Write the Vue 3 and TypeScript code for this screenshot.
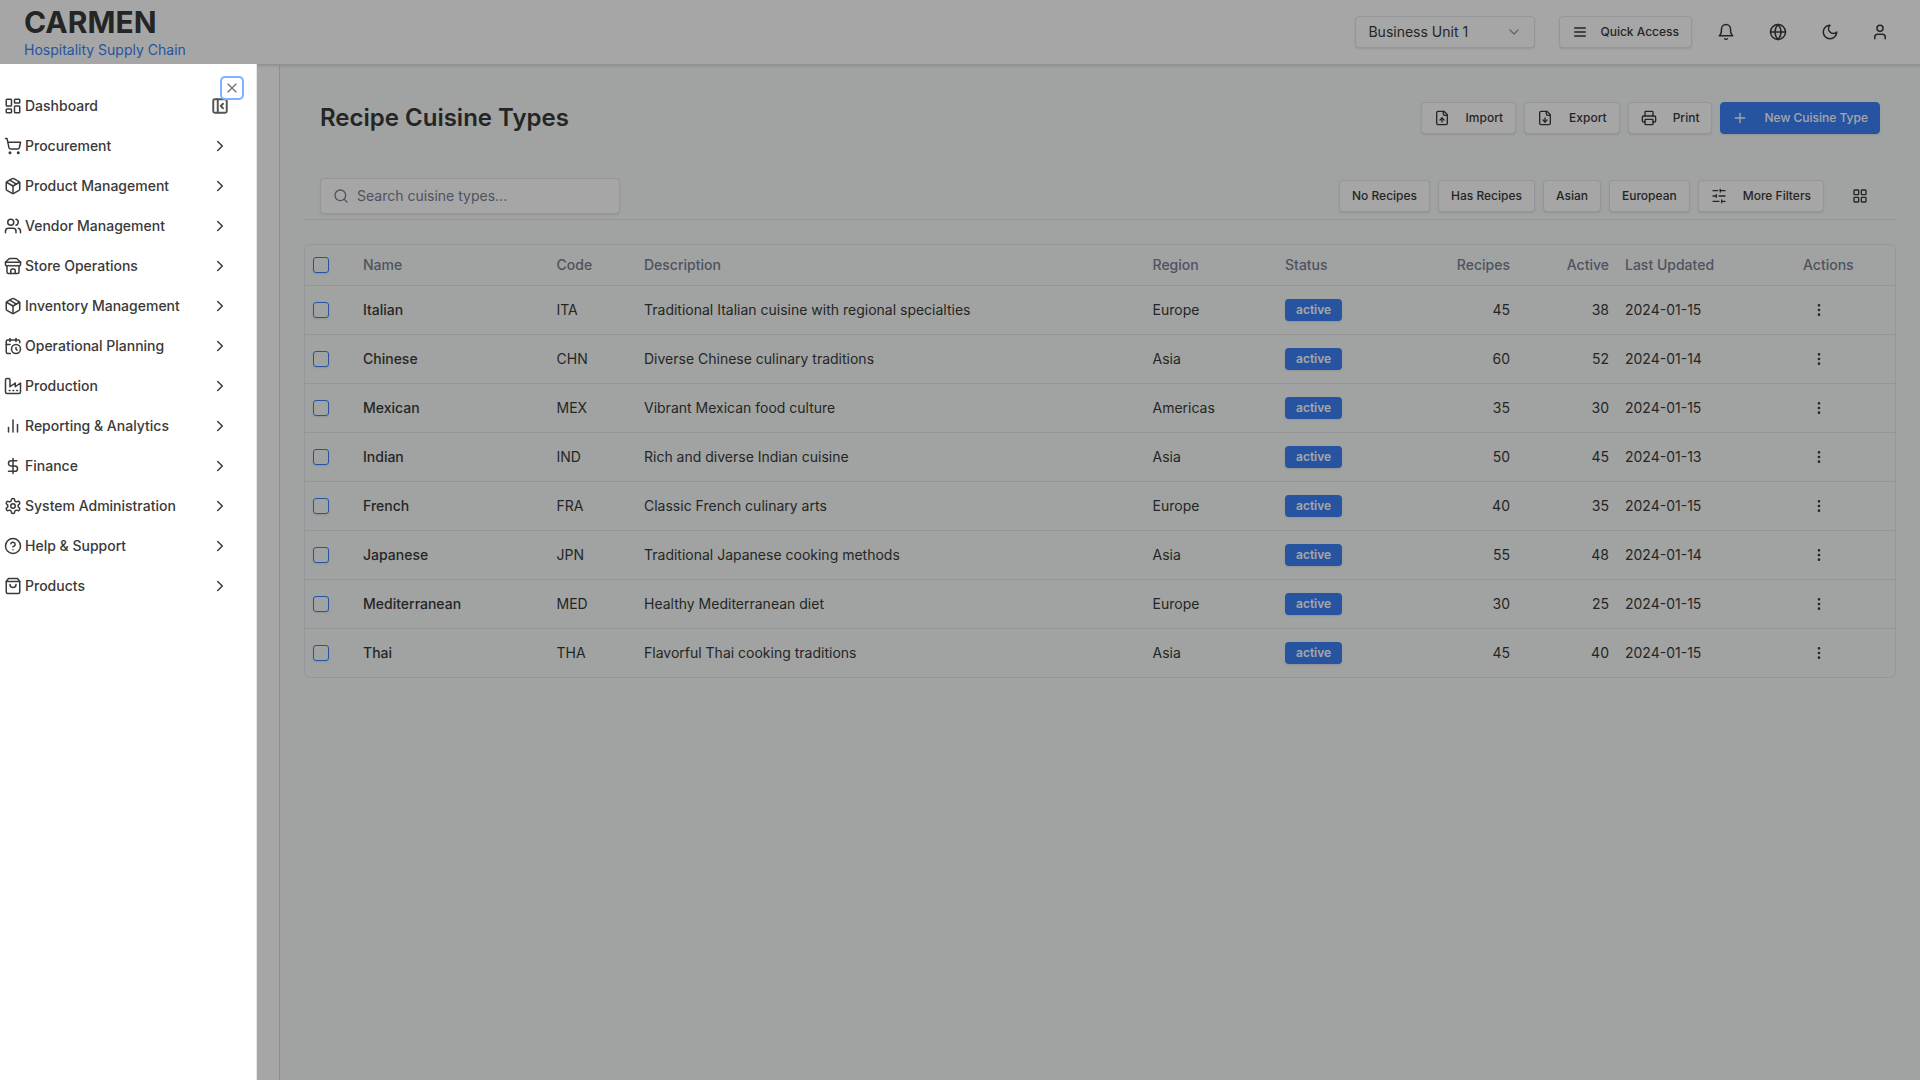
<script setup lang="ts">
const icons: Record<string, string> = {
  dashboard: '<rect x="3" y="3" width="7" height="9" rx="1"/><rect x="14" y="3" width="7" height="5" rx="1"/><rect x="14" y="12" width="7" height="9" rx="1"/><rect x="3" y="16" width="7" height="5" rx="1"/>',
  cart: '<circle cx="8" cy="21" r="1"/><circle cx="19" cy="21" r="1"/><path d="M2.05 2.05h2l2.66 12.42a2 2 0 0 0 2 1.58h9.78a2 2 0 0 0 1.95-1.57l1.65-7.43H5.12"/>',
  pkg: '<path d="m7.5 4.27 9 5.15"/><path d="M21 8a2 2 0 0 0-1-1.73l-7-4a2 2 0 0 0-2 0l-7 4A2 2 0 0 0 3 8v8a2 2 0 0 0 1 1.73l7 4a2 2 0 0 0 2 0l7-4A2 2 0 0 0 21 16Z"/><path d="m3.3 7 8.7 5 8.7-5"/><path d="M12 22V12"/>',
  users: '<path d="M16 21v-2a4 4 0 0 0-4-4H6a4 4 0 0 0-4 4v2"/><circle cx="9" cy="7" r="4"/><path d="M22 21v-2a4 4 0 0 0-3-3.87"/><path d="M16 3.13a4 4 0 0 1 0 7.75"/>',
  store: '<path d="m2 7 4.41-4.41A2 2 0 0 1 7.83 2h8.34a2 2 0 0 1 1.42.59L22 7"/><path d="M4 12v8a2 2 0 0 0 2 2h12a2 2 0 0 0 2-2v-8"/><path d="M15 22v-4a2 2 0 0 0-2-2h-2a2 2 0 0 0-2 2v4"/><path d="M2 7h20"/><path d="M22 7v3a2 2 0 0 1-2 2a2.7 2.7 0 0 1-1.59-.63.7.7 0 0 0-.82 0A2.7 2.7 0 0 1 16 12a2.7 2.7 0 0 1-1.59-.63.7.7 0 0 0-.82 0A2.7 2.7 0 0 1 12 12a2.7 2.7 0 0 1-1.59-.63.7.7 0 0 0-.82 0A2.7 2.7 0 0 1 8 12a2.7 2.7 0 0 1-1.59-.63.7.7 0 0 0-.82 0A2.7 2.7 0 0 1 4 12a2 2 0 0 1-2-2V7"/>',
  calendar: '<path d="M21 7.5V6a2 2 0 0 0-2-2H5a2 2 0 0 0-2 2v14a2 2 0 0 0 2 2h3.5"/><path d="M16 2v4"/><path d="M8 2v4"/><path d="M3 10h5"/><path d="M17.5 17.5 16 16.3V14"/><circle cx="16" cy="16" r="6"/>',
  factory: '<path d="M2 20a2 2 0 0 0 2 2h16a2 2 0 0 0 2-2V8l-7 5V8l-7 5V4a2 2 0 0 0-2-2H4a2 2 0 0 0-2 2Z"/><path d="M17 18h1"/><path d="M12 18h1"/><path d="M7 18h1"/>',
  chart: '<path d="M18 20V10"/><path d="M12 20V4"/><path d="M6 20v-6"/>',
  dollar: '<path d="M12 2v20"/><path d="M17 5H9.5a3.5 3.5 0 0 0 0 7h5a3.5 3.5 0 0 1 0 7H6"/>',
  settings: '<path d="M12.22 2h-.44a2 2 0 0 0-2 2v.18a2 2 0 0 1-1 1.73l-.43.25a2 2 0 0 1-2 0l-.15-.08a2 2 0 0 0-2.73.73l-.22.38a2 2 0 0 0 .73 2.73l.15.1a2 2 0 0 1 1 1.72v.51a2 2 0 0 1-1 1.74l-.15.09a2 2 0 0 0-.73 2.73l.22.38a2 2 0 0 0 2.73.73l.15-.08a2 2 0 0 1 2 0l.43.25a2 2 0 0 1 1 1.73V20a2 2 0 0 0 2 2h.44a2 2 0 0 0 2-2v-.18a2 2 0 0 1 1-1.73l.43-.25a2 2 0 0 1 2 0l.15.08a2 2 0 0 0 2.73-.73l.22-.39a2 2 0 0 0-.73-2.73l-.15-.08a2 2 0 0 1-1-1.74v-.5a2 2 0 0 1 1-1.74l.15-.09a2 2 0 0 0 .73-2.73l-.22-.38a2 2 0 0 0-2.73-.73l-.15.08a2 2 0 0 1-2 0l-.43-.25a2 2 0 0 1-1-1.73V4a2 2 0 0 0-2-2z"/><circle cx="12" cy="12" r="3"/>',
  help: '<circle cx="12" cy="12" r="10"/><path d="M9.09 9a3 3 0 0 1 5.83 1c0 2-3 3-3 3"/><path d="M12 17h.01"/>',
  bag: '<path d="M6 2 3 6v14a2 2 0 0 0 2 2h14a2 2 0 0 0 2-2V6l-3-4Z"/><path d="M3 6h18"/><path d="M16 10a4 4 0 0 1-8 0"/>',
  panel: '<rect x="3" y="3" width="18" height="18" rx="2"/><path d="M9 3v18"/><path d="m16 15-3-3 3-3"/>',
  x: '<path d="M18 6 6 18"/><path d="m6 6 12 12"/>',
  right: '<path d="m9 18 6-6-6-6"/>',
  down: '<path d="m6 9 6 6 6-6"/>',
  menu: '<path d="M4 6h16"/><path d="M4 12h16"/><path d="M4 18h16"/>',
  bell: '<path d="M6 8a6 6 0 0 1 12 0c0 7 3 9 3 9H3s3-2 3-9"/><path d="M10.3 21a1.94 1.94 0 0 0 3.4 0"/>',
  globe: '<circle cx="12" cy="12" r="10"/><path d="M12 2a14.5 14.5 0 0 0 0 20 14.5 14.5 0 0 0 0-20"/><path d="M2 12h20"/>',
  moon: '<path d="M12 3a6 6 0 0 0 9 9 9 9 0 1 1-9-9Z"/>',
  user: '<path d="M19 21v-2a4 4 0 0 0-4-4H9a4 4 0 0 0-4 4v2"/><circle cx="12" cy="7" r="4"/>',
  fileUp: '<path d="M15 2H6a2 2 0 0 0-2 2v16a2 2 0 0 0 2 2h12a2 2 0 0 0 2-2V7Z"/><path d="M14 2v4a2 2 0 0 0 2 2h4"/><path d="M12 12v6"/><path d="m15 15-3-3-3 3"/>',
  fileDown: '<path d="M15 2H6a2 2 0 0 0-2 2v16a2 2 0 0 0 2 2h12a2 2 0 0 0 2-2V7Z"/><path d="M14 2v4a2 2 0 0 0 2 2h4"/><path d="M12 18v-6"/><path d="m9 15 3 3 3-3"/>',
  printer: '<path d="M6 18H4a2 2 0 0 1-2-2v-5a2 2 0 0 1 2-2h16a2 2 0 0 1 2 2v5a2 2 0 0 1-2 2h-2"/><path d="M6 9V3a1 1 0 0 1 1-1h10a1 1 0 0 1 1 1v6"/><rect x="6" y="14" width="12" height="8" rx="1"/>',
  plus: '<path d="M5 12h14"/><path d="M12 5v14"/>',
  search: '<circle cx="11" cy="11" r="8"/><path d="m21 21-4.3-4.3"/>',
  sliders: '<path d="M21 4h-7"/><path d="M10 4H3"/><path d="M21 12h-9"/><path d="M8 12H3"/><path d="M21 20h-5"/><path d="M12 20H3"/><path d="M14 2v4"/><path d="M8 10v4"/><path d="M16 18v4"/>',
  grid: '<rect x="3" y="3" width="7" height="7" rx="1"/><rect x="14" y="3" width="7" height="7" rx="1"/><rect x="14" y="14" width="7" height="7" rx="1"/><rect x="3" y="14" width="7" height="7" rx="1"/>',
  kebab: '<circle cx="12" cy="5" r="1"/><circle cx="12" cy="12" r="1"/><circle cx="12" cy="19" r="1"/>',
}

const nav = [
  { label: 'Dashboard', icon: 'dashboard', end: 'panel' },
  { label: 'Procurement', icon: 'cart', end: 'right' },
  { label: 'Product Management', icon: 'pkg', end: 'right' },
  { label: 'Vendor Management', icon: 'users', end: 'right' },
  { label: 'Store Operations', icon: 'store', end: 'right' },
  { label: 'Inventory Management', icon: 'pkg', end: 'right' },
  { label: 'Operational Planning', icon: 'calendar', end: 'right' },
  { label: 'Production', icon: 'factory', end: 'right' },
  { label: 'Reporting & Analytics', icon: 'chart', end: 'right' },
  { label: 'Finance', icon: 'dollar', end: 'right' },
  { label: 'System Administration', icon: 'settings', end: 'right' },
  { label: 'Help & Support', icon: 'help', end: 'right' },
  { label: 'Products', icon: 'bag', end: 'right' },
]

const actions = [
  { label: 'Import', icon: 'fileUp' },
  { label: 'Export', icon: 'fileDown' },
  { label: 'Print', icon: 'printer' },
]

const filters = ['No Recipes', 'Has Recipes', 'Asian', 'European']

const rows = [
  { name: 'Italian', code: 'ITA', desc: 'Traditional Italian cuisine with regional specialties', region: 'Europe', recipes: 45, active: 38, updated: '2024-01-15' },
  { name: 'Chinese', code: 'CHN', desc: 'Diverse Chinese culinary traditions', region: 'Asia', recipes: 60, active: 52, updated: '2024-01-14' },
  { name: 'Mexican', code: 'MEX', desc: 'Vibrant Mexican food culture', region: 'Americas', recipes: 35, active: 30, updated: '2024-01-15' },
  { name: 'Indian', code: 'IND', desc: 'Rich and diverse Indian cuisine', region: 'Asia', recipes: 50, active: 45, updated: '2024-01-13' },
  { name: 'French', code: 'FRA', desc: 'Classic French culinary arts', region: 'Europe', recipes: 40, active: 35, updated: '2024-01-15' },
  { name: 'Japanese', code: 'JPN', desc: 'Traditional Japanese cooking methods', region: 'Asia', recipes: 55, active: 48, updated: '2024-01-14' },
  { name: 'Mediterranean', code: 'MED', desc: 'Healthy Mediterranean diet', region: 'Europe', recipes: 30, active: 25, updated: '2024-01-15' },
  { name: 'Thai', code: 'THA', desc: 'Flavorful Thai cooking traditions', region: 'Asia', recipes: 45, active: 40, updated: '2024-01-15' },
]
</script>

<template>
  <div class="page">
    <header class="topbar">
      <div class="brand">
        <div class="brand-name">CARMEN</div>
        <div class="brand-sub">Hospitality Supply Chain</div>
      </div>
      <div class="top-tools">
        <button class="select">
          <span class="tx">Business Unit 1</span>
          <svg class="ic s16 faint" viewBox="0 0 24 24" v-html="icons.down"></svg>
        </button>
        <button class="btn quick">
          <svg class="ic s16" viewBox="0 0 24 24" v-html="icons.menu"></svg>
          <span class="tx">Quick Access</span>
        </button>
        <div class="top-icons">
          <button class="ghost"><svg class="ic s18" viewBox="0 0 24 24" v-html="icons.bell"></svg></button>
          <button class="ghost"><svg class="ic s18" viewBox="0 0 24 24" v-html="icons.globe"></svg></button>
          <button class="ghost"><svg class="ic s18" viewBox="0 0 24 24" v-html="icons.moon"></svg></button>
          <button class="ghost last"><svg class="ic s18" viewBox="0 0 24 24" v-html="icons.user"></svg></button>
        </div>
      </div>
    </header>

    <div class="body">
      <aside class="rail"></aside>
      <main class="main">
        <div class="title-row">
          <h1>Recipe Cuisine Types</h1>
          <div class="actions">
            <button v-for="a in actions" :key="a.label" class="btn">
              <svg class="ic s16" viewBox="0 0 24 24" v-html="icons[a.icon]"></svg>
              <span class="tx">{{ a.label }}</span>
            </button>
            <button class="btn primary">
              <svg class="ic s16" viewBox="0 0 24 24" v-html="icons.plus"></svg>
              <span class="tx">New Cuisine Type</span>
            </button>
          </div>
        </div>

        <div class="toolbar">
          <div class="search">
            <svg class="ic s16 muted" viewBox="0 0 24 24" v-html="icons.search"></svg>
            <span class="tx">Search cuisine types...</span>
          </div>
          <div class="filters">
            <button v-for="f in filters" :key="f" class="btn"><span class="tx">{{ f }}</span></button>
            <button class="btn">
              <svg class="ic s16" viewBox="0 0 24 24" v-html="icons.sliders"></svg>
              <span class="tx">More Filters</span>
            </button>
            <button class="ghost grid-btn"><svg class="ic s16" viewBox="0 0 24 24" v-html="icons.grid"></svg></button>
          </div>
        </div>

        <div class="table-wrap">
          <table>
            <colgroup>
              <col class="c-check" /><col class="c-name" /><col class="c-code" /><col class="c-desc" /><col class="c-region" />
              <col class="c-status" /><col class="c-recipes" /><col class="c-active" /><col class="c-updated" /><col />
            </colgroup>
            <thead>
              <tr>
                <th class="ctl"><span class="check"></span></th>
                <th>Name</th>
                <th>Code</th>
                <th>Description</th>
                <th>Region</th>
                <th>Status</th>
                <th class="num">Recipes</th>
                <th class="num">Active</th>
                <th>Last Updated</th>
                <th>Actions</th>
              </tr>
            </thead>
            <tbody>
              <tr v-for="r in rows" :key="r.code">
                <td class="ctl"><span class="check"></span></td>
                <td class="name">{{ r.name }}</td>
                <td>{{ r.code }}</td>
                <td>{{ r.desc }}</td>
                <td>{{ r.region }}</td>
                <td class="ctl"><span class="badge">active</span></td>
                <td class="num">{{ r.recipes }}</td>
                <td class="num">{{ r.active }}</td>
                <td>{{ r.updated }}</td>
                <td class="ctl"><button class="kebab"><svg class="ic s16" viewBox="0 0 24 24" v-html="icons.kebab"></svg></button></td>
              </tr>
            </tbody>
          </table>
        </div>
      </main>
    </div>

    <div class="overlay"></div>

    <aside class="sheet">
      <button class="close"><svg class="ic s16" viewBox="0 0 24 24" v-html="icons.x"></svg></button>
      <nav class="nav">
        <a v-for="n in nav" :key="n.label" class="nav-item">
          <svg class="ic s18" viewBox="0 0 24 24" v-html="icons[n.icon]"></svg>
          <span class="nav-label">{{ n.label }}</span>
          <svg class="ic s18" :class="{ bold: n.end === 'panel' }" viewBox="0 0 24 24" v-html="icons[n.end]"></svg>
        </a>
      </nav>
    </aside>
  </div>
</template>

<style>
html, body { margin: 0; background: #fff; overflow: hidden; }
</style>

<style scoped>
.page {
  position: relative;
  width: 1920px;
  height: 1080px;
  overflow: hidden;
  font-family: Inter, "Liberation Sans", sans-serif;
  font-size: 14px;
  color: #3a3a3a;
  background: #f6faf8;
}
button { font-family: inherit; color: inherit; padding: 0; margin: 0; background: none; border: 0; }

.ic { flex: none; display: block; fill: none; stroke: currentColor; stroke-width: 2; stroke-linecap: round; stroke-linejoin: round; }
.s16 { width: 16px; height: 16px; }
.s18 { width: 18px; height: 18px; }
.faint { opacity: .5; }
.muted { color: #7a8094; }
.bold { stroke-width: 2.6; color: #555; }
.tx { display: block; padding-bottom: 2px; }

.topbar {
  height: 65px;
  box-sizing: border-box;
  background: #fff;
  border-bottom: 1px solid #dcdfe4;
  box-shadow: 0 1px 3px rgba(0,0,0,.12);
  display: flex;
  justify-content: space-between;
  padding: 4px 24px 0;
  position: relative;
}
.brand-name { font-size: 30px; line-height: 36px; font-weight: 700; }
.brand-sub { font-size: 14px; line-height: 20px; color: #3b82f6; }
.top-tools { display: flex; align-items: flex-start; padding-top: 12px; }
.select {
  width: 180px; height: 32px; box-sizing: border-box;
  border: 1px solid #e5e7eb; border-radius: 4px; background: #fff;
  box-shadow: 0 1px 2px rgba(0,0,0,.1);
  display: flex; align-items: center; justify-content: space-between;
  padding: 0 12px; font-size: 14px; margin-right: 24px;
}
.btn {
  height: 32px; box-sizing: border-box;
  border: 1px solid #e5e7eb; border-radius: 4px; background: #fff;
  box-shadow: 0 1px 2px rgba(0,0,0,.1);
  display: inline-flex; align-items: center; gap: 16px;
  padding: 0 12px; font-size: 12px; font-weight: 500; white-space: nowrap;
}
.quick { margin-right: 18px; gap: 12px; }
.top-icons { display: flex; height: 32px; gap: 20px; }
.ghost { width: 32px; height: 32px; display: flex; align-items: center; justify-content: center; }
.ghost.last { margin-left: -2px; }

.body { display: flex; height: 1015px; }
.rail { width: 279px; flex: none; background: #fff; border-right: 1px solid #d8dbe0; }
.main { flex: 1; min-width: 0; box-sizing: border-box; padding: 23px 24px 0; }

.title-row { display: flex; justify-content: space-between; align-items: center; padding: 14px 16px 0; height: 32px; }
h1 { margin: 0; font-size: 24px; line-height: 32px; font-weight: 600; }
.actions { display: flex; gap: 8px; }
.primary { background: #3b82f6; border-color: #3b82f6; color: #fff; padding: 0 11px 0 11px; }

.toolbar {
  display: flex; justify-content: space-between; align-items: center;
  margin-top: 44px; padding: 0 20px 5px 16px;
  height: 36px;
  box-sizing: content-box;
  border-bottom: 1px solid #e5e7eb;
}
.search {
  width: 300px; height: 36px; box-sizing: border-box;
  border: 1px solid #e5e7eb; border-radius: 4px; background: #fff;
  box-shadow: 0 1px 2px rgba(0,0,0,.08);
  display: flex; align-items: center; gap: 8px; padding: 0 12px;
  color: #7a8094;
}
.filters { display: flex; align-items: center; gap: 8px; }
.grid-btn { margin-left: 12px; }

.table-wrap {
  margin-top: 24px;
  border: 1px solid #e5e7eb;
  border-radius: 6px;
  overflow: hidden;
}
table { width: 100%; border-collapse: collapse; table-layout: fixed; }
.c-check { width: 50px; }
.c-name { width: 193.5px; }
.c-code { width: 87.5px; }
.c-desc { width: 508.5px; }
.c-region { width: 132.5px; }
.c-status { width: 143px; }
.c-recipes { width: 98px; }
.c-active { width: 99px; }
.c-updated { width: 178px; }
th {
  height: 40px; padding: 0 8px 1px; box-sizing: border-box; text-align: left; font-weight: 500; color: #7a8094;
  border-bottom: 1px solid #e5e7eb;
}
td { height: 47px; padding: 0 8px 1px; border-bottom: 1px solid #e5e7eb; }
th.ctl { padding-bottom: 0; }
td.ctl { padding-bottom: 0; height: 48px; }
tbody tr:last-child td { border-bottom: 0; }
.name { font-weight: 500; }
th.num, td.num { text-align: right; }
.check {
  display: block; width: 16px; height: 16px; box-sizing: border-box;
  border: 1px solid #3b82f6; border-radius: 3px; background: transparent;
  box-shadow: 0 1px 2px rgba(0,0,0,.1);
}
.badge {
  display: block; width: max-content; box-sizing: border-box; height: 22px; line-height: 19px;
  padding: 0 10px; border: 1px solid transparent; border-radius: 4px;
  background: #3b82f6; color: #fff; font-size: 12px; font-weight: 600;
  box-shadow: 0 1px 2px rgba(0,0,0,.1);
}
.kebab { width: 32px; height: 32px; display: flex; align-items: center; justify-content: center; }

.overlay { position: absolute; inset: 0; background: rgba(0,0,0,.35); backdrop-filter: blur(.6px); }

.sheet {
  position: absolute; left: 0; top: 64px; bottom: 0; width: 257px;
  box-sizing: border-box; background: #fff; border-right: 1px solid #e5e7eb;
  padding-top: 22px;
}
.close {
  position: absolute; left: 222px; top: 14px; width: 20px; height: 20px;
  display: flex; align-items: center; justify-content: center;
  border-radius: 3px; box-shadow: 0 0 0 2px #80b2ff; color: #777;
}
.nav { display: flex; flex-direction: column; }
.nav-item {
  height: 40px; width: 229px; box-sizing: border-box;
  display: flex; align-items: center; gap: 3px; padding-left: 4px;
  font-weight: 500;
}
.nav-label { flex: 1; display: block; padding-bottom: 1px; }
</style>
